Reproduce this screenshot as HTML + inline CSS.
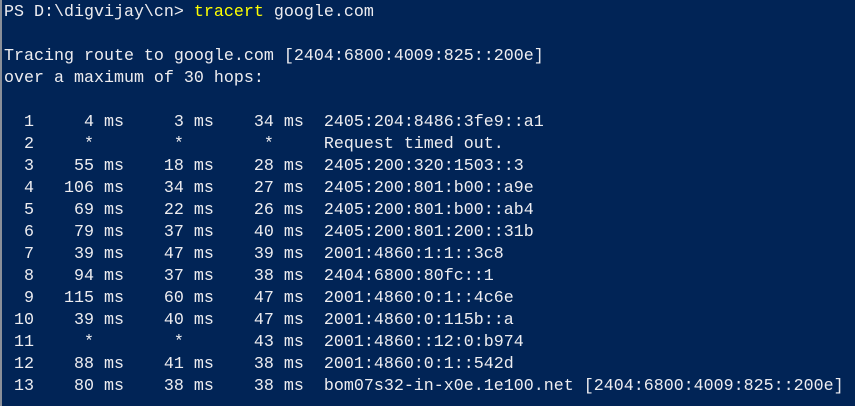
<!DOCTYPE html>
<html><head><meta charset="utf-8"><style>
html,body{margin:0;padding:0;}
body{width:855px;height:406px;background:#012456;overflow:hidden;position:relative;}
.bar{position:absolute;left:0;top:0;width:2px;height:406px;background:#8a8f99;}
pre{margin:0;position:absolute;left:4px;top:2px;font-family:"Liberation Mono",monospace;font-size:16.67px;line-height:22px;color:#eeedf0;white-space:pre;}
.y{color:#ffff00;}
</style></head><body><div class="bar"></div><pre>PS D:\digvijay\cn&gt; <span class="y">tracert</span> google.com

Tracing route to google.com [2404:6800:4009:825::200e]
over a maximum of 30 hops:

  1     4 ms     3 ms    34 ms  2405:204:8486:3fe9::a1
  2     *        *        *     Request timed out.
  3    55 ms    18 ms    28 ms  2405:200:320:1503::3
  4   106 ms    34 ms    27 ms  2405:200:801:b00::a9e
  5    69 ms    22 ms    26 ms  2405:200:801:b00::ab4
  6    79 ms    37 ms    40 ms  2405:200:801:200::31b
  7    39 ms    47 ms    39 ms  2001:4860:1:1::3c8
  8    94 ms    37 ms    38 ms  2404:6800:80fc::1
  9   115 ms    60 ms    47 ms  2001:4860:0:1::4c6e
 10    39 ms    40 ms    47 ms  2001:4860:0:115b::a
 11     *        *       43 ms  2001:4860::12:0:b974
 12    88 ms    41 ms    38 ms  2001:4860:0:1::542d
 13    80 ms    38 ms    38 ms  bom07s32-in-x0e.1e100.net [2404:6800:4009:825::200e]</pre></body></html>
